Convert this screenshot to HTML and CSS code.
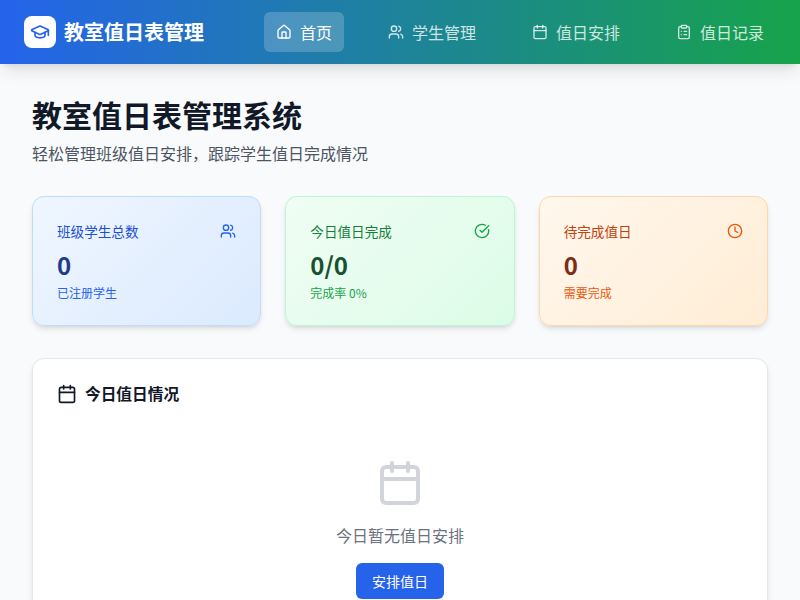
FILE: index.html
```html
<!DOCTYPE html>
<html lang="zh">
<head>
    <meta charset="utf-8">
    <title>教室值日表管理系统</title>
    <link rel="stylesheet" href="styles.css">
</head>
<body>
    <header class="topbar">
        <div class="brand">
            <span class="brand-logo">
                <svg width="20" height="20" viewBox="0 0 24 24"><path d="M21.42 10.92a1 1 0 0 0-.02-1.84L12.83 5.18a2 2 0 0 0-1.66 0L2.6 9.08a1 1 0 0 0 0 1.83l8.57 3.91a2 2 0 0 0 1.66 0z"/><path d="M22 10v6"/><path d="M6 12.5V16a6 3 0 0 0 12 0v-3.5"/></svg>
            </span>
            <span class="brand-name">教室值日表管理</span>
        </div>
        <nav class="nav">
            <a class="nav-item active">
                <svg class="icon-16" viewBox="0 0 24 24"><path d="M15 21v-8a1 1 0 0 0-1-1h-4a1 1 0 0 0-1 1v8"/><path d="M3 10a2 2 0 0 1 .71-1.53l7-6a2 2 0 0 1 2.58 0l7 6A2 2 0 0 1 21 10v9a2 2 0 0 1-2 2H5a2 2 0 0 1-2-2z"/></svg>
                <span>首页</span>
            </a>
            <a class="nav-item">
                <svg class="icon-16" viewBox="0 0 24 24"><path d="M16 21v-2a4 4 0 0 0-4-4H6a4 4 0 0 0-4 4v2"/><circle cx="9" cy="7" r="4"/><path d="M22 21v-2a4 4 0 0 0-3-3.87"/><path d="M16 3.13a4 4 0 0 1 0 7.75"/></svg>
                <span>学生管理</span>
            </a>
            <a class="nav-item">
                <svg class="icon-16" viewBox="0 0 24 24"><path d="M8 2v4"/><path d="M16 2v4"/><rect x="3" y="4" width="18" height="18" rx="2"/><path d="M3 10h18"/></svg>
                <span>值日安排</span>
            </a>
            <a class="nav-item">
                <svg class="icon-16" viewBox="0 0 24 24"><rect x="8" y="2" width="8" height="4" rx="1"/><path d="M16 4h2a2 2 0 0 1 2 2v14a2 2 0 0 1-2 2H6a2 2 0 0 1-2-2V6a2 2 0 0 1 2-2h2"/><path d="M12 11h4"/><path d="M12 16h4"/><path d="M8 11h.01"/><path d="M8 16h.01"/></svg>
                <span>值日记录</span>
            </a>
        </nav>
    </header>

    <main class="page">
        <div class="page-head">
            <h1>教室值日表管理系统</h1>
            <p>轻松管理班级值日安排，跟踪学生值日完成情况</p>
        </div>

        <div class="stats">
            <div class="stat stat-blue">
                <div class="stat-top">
                    <span class="stat-label">班级学生总数</span>
                    <svg class="icon-16 stat-icon" viewBox="0 0 24 24"><path d="M16 21v-2a4 4 0 0 0-4-4H6a4 4 0 0 0-4 4v2"/><circle cx="9" cy="7" r="4"/><path d="M22 21v-2a4 4 0 0 0-3-3.87"/><path d="M16 3.13a4 4 0 0 1 0 7.75"/></svg>
                </div>
                <div class="stat-value">0</div>
                <div class="stat-note">已注册学生</div>
            </div>
            <div class="stat stat-green">
                <div class="stat-top">
                    <span class="stat-label">今日值日完成</span>
                    <svg class="icon-16 stat-icon" viewBox="0 0 24 24"><path d="M21.8 10A10 10 0 1 1 17 3.34"/><path d="m9 11 3 3L22 4"/></svg>
                </div>
                <div class="stat-value">0/0</div>
                <div class="stat-note">完成率 0%</div>
            </div>
            <div class="stat stat-orange">
                <div class="stat-top">
                    <span class="stat-label">待完成值日</span>
                    <svg class="icon-16 stat-icon" viewBox="0 0 24 24"><circle cx="12" cy="12" r="10"/><path d="M12 6v6l4 2"/></svg>
                </div>
                <div class="stat-value">0</div>
                <div class="stat-note">需要完成</div>
            </div>
        </div>

        <section class="panel">
            <h2 class="panel-title">
                <svg class="icon-20" viewBox="0 0 24 24"><path d="M8 2v4"/><path d="M16 2v4"/><rect x="3" y="4" width="18" height="18" rx="2"/><path d="M3 10h18"/></svg>
                今日值日情况
            </h2>
            <div class="empty">
                <svg class="icon-48" viewBox="0 0 24 24"><path d="M8 2v4"/><path d="M16 2v4"/><rect x="3" y="4" width="18" height="18" rx="2"/><path d="M3 10h18"/></svg>
                <p>今日暂无值日安排</p>
                <button>安排值日</button>
            </div>
        </section>
    </main>
</body>
</html>
```

FILE: styles.css
```css
* {
    box-sizing: border-box;
}

body {
    margin: 0;
    font-family: "Noto Sans CJK SC", sans-serif;
    background-color: #f9fafb;
    color: #111827;
    height: 600px;
    overflow: hidden;
}

svg {
    fill: none;
    stroke: currentColor;
    stroke-width: 2;
    stroke-linecap: round;
    stroke-linejoin: round;
    flex-shrink: 0;
}

.icon-16 {
    width: 16px;
    height: 16px;
}

.icon-20 {
    width: 20px;
    height: 20px;
}

.icon-48 {
    width: 48px;
    height: 48px;
}

/* Top bar */
.topbar {
    height: 64px;
    padding: 0 24px;
    display: flex;
    justify-content: space-between;
    align-items: center;
    background-image: linear-gradient(90deg, #2563eb, #16a34a);
    box-shadow: 0 10px 15px -3px rgba(0, 0, 0, 0.1), 0 4px 6px -4px rgba(0, 0, 0, 0.1);
    color: #fff;
}

.brand {
    display: flex;
    align-items: center;
    gap: 8px;
}

.brand-logo {
    width: 32px;
    height: 32px;
    border-radius: 8px;
    background-color: #fff;
    color: #2563eb;
    display: flex;
    align-items: center;
    justify-content: center;
}

.brand-name {
    font-size: 20px;
    font-weight: 700;
    line-height: 28px;
}

.nav {
    display: flex;
    gap: 32px;
}

.nav-item {
    height: 40px;
    padding: 0 12px;
    display: flex;
    align-items: center;
    gap: 8px;
    border-radius: 6px;
    font-size: 16px;
    color: rgba(255, 255, 255, 0.8);
}

.nav-item.active {
    background-color: rgba(255, 255, 255, 0.2);
    color: #fff;
}

/* Page */
.page {
    padding: 32px;
}

.page-head {
    margin-bottom: 31px;
}

.page-head h1 {
    margin: 0 0 9px;
    font-size: 30px;
    line-height: 36px;
    font-weight: 700;
}

.page-head p {
    margin: 0;
    font-size: 16px;
    line-height: 24px;
    color: #4b5563;
}

/* Stat cards */
.stats {
    display: grid;
    grid-template-columns: repeat(3, 1fr);
    gap: 24px;
    margin-bottom: 32px;
}

.stat {
    padding: 24px;
    border: 1px solid;
    border-radius: 12px;
    box-shadow: 0 4px 6px -1px rgba(0, 0, 0, 0.1), 0 2px 4px -2px rgba(0, 0, 0, 0.1);
}

.stat-top {
    display: flex;
    justify-content: space-between;
    align-items: center;
    margin-bottom: 8px;
}

.stat-label {
    font-size: 13.6px;
    line-height: 20px;
}

.stat-value {
    font-size: 24px;
    line-height: 32px;
    font-weight: 700;
    margin-bottom: 4px;
}

.stat-note {
    font-size: 12px;
    line-height: 16px;
}

.stat-blue {
    background-image: linear-gradient(135deg, #eff6ff, #dbeafe);
    border-color: #bfdbfe;
}

.stat-blue .stat-label {
    color: #1d4ed8;
}

.stat-blue .stat-icon,
.stat-blue .stat-note {
    color: #2563eb;
}

.stat-blue .stat-value {
    color: #1e3a8a;
}

.stat-green {
    background-image: linear-gradient(135deg, #f0fdf4, #dcfce7);
    border-color: #bbf7d0;
}

.stat-green .stat-label {
    color: #15803d;
}

.stat-green .stat-icon,
.stat-green .stat-note {
    color: #16a34a;
}

.stat-green .stat-value {
    color: #14532d;
}

.stat-orange {
    background-image: linear-gradient(135deg, #fff7ed, #ffedd5);
    border-color: #fed7aa;
}

.stat-orange .stat-label {
    color: #c2410c;
}

.stat-orange .stat-icon,
.stat-orange .stat-note {
    color: #ea580c;
}

.stat-orange .stat-value {
    color: #7c2d12;
}

/* Today panel */
.panel {
    padding: 24px;
    background-color: #fff;
    border: 1px solid #e5e7eb;
    border-radius: 12px;
    box-shadow: 0 4px 6px -1px rgba(0, 0, 0, 0.1), 0 2px 4px -2px rgba(0, 0, 0, 0.1);
}

.panel-title {
    margin: 0;
    display: flex;
    align-items: center;
    gap: 8px;
    font-size: 15.7px;
    line-height: 22px;
    font-weight: 700;
}

.empty {
    padding: 54px 0 32px;
    display: flex;
    flex-direction: column;
    align-items: center;
    color: #6b7280;
}

.empty .icon-48 {
    color: #d1d5db;
    margin-bottom: 16px;
}

.empty p {
    margin: 0 0 16px;
    font-size: 16px;
    line-height: 24px;
}

.empty button {
    height: 36px;
    padding: 0 16px;
    border: none;
    border-radius: 6px;
    background-color: #2563eb;
    color: #fff;
    font-family: inherit;
    font-size: 14px;
}
```
